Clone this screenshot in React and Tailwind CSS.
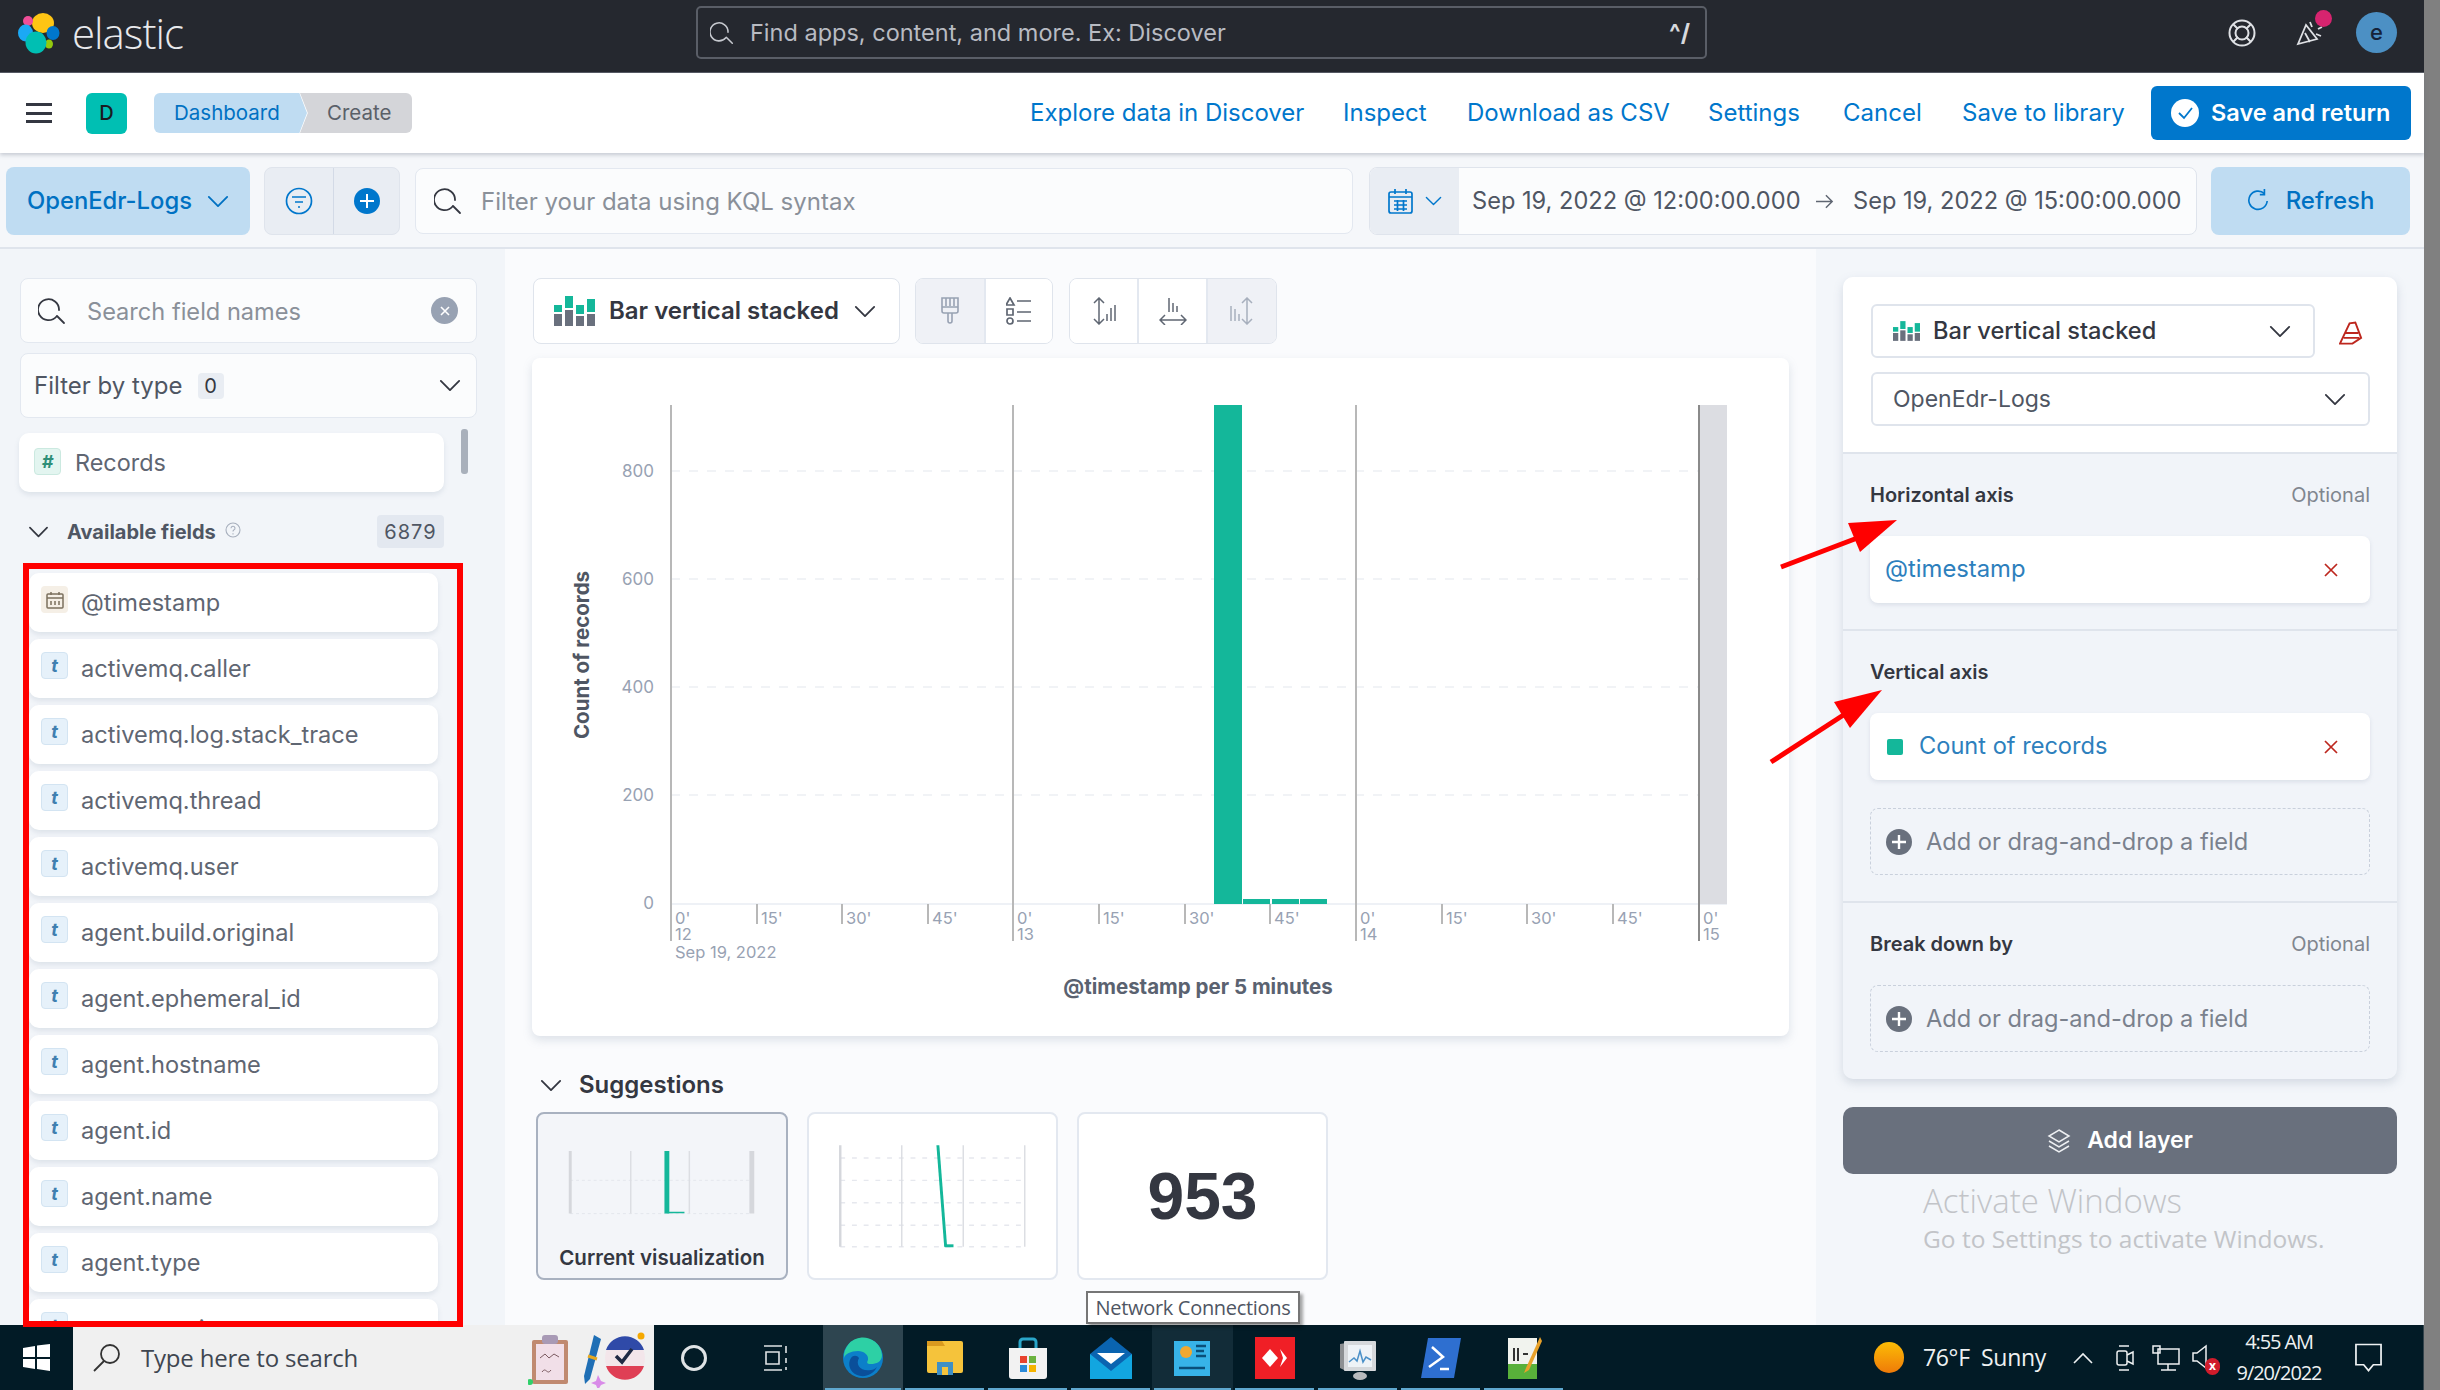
import React from "react";

const Search = ({ className }) => (
  <svg viewBox="0 0 28 28" fill="none" stroke="currentColor" strokeWidth="1.8" strokeLinecap="round" className={className}>
    <path d="M18.5 19.5A10.5 10.5 0 1 1 21 13" />
    <path d="M19 19l7 7" />
  </svg>
);
const Chev = ({ className }) => (
  <svg viewBox="0 0 24 14" fill="none" stroke="currentColor" strokeWidth="2" strokeLinecap="round" strokeLinejoin="round" className={className}>
    <path d="M2 2l10 10L22 2" />
  </svg>
);
const BarStack = ({ className }) => (
  <svg viewBox="0 0 41 30" className={className}>
    <g fill="#69707d">
      <rect x="0" y="18" width="8" height="12" />
      <rect x="11" y="14" width="8" height="16" />
      <rect x="22" y="20" width="8" height="10" />
      <rect x="33" y="18" width="8" height="12" />
    </g>
    <g fill="#14b79a">
      <rect x="0" y="9" width="8" height="7" />
      <rect x="11" y="0" width="8" height="12" />
      <rect x="22" y="9" width="8" height="9" />
      <rect x="33" y="3" width="8" height="13" />
    </g>
  </svg>
);
const Logo = () => (
  <svg viewBox="0 0 42 42" className="w-[42px] h-[42px]">
    <ellipse cx="25" cy="11" rx="11" ry="10" fill="#fec514" />
    <ellipse cx="10" cy="9" rx="5" ry="5" fill="#f04e98" />
    <ellipse cx="7.5" cy="21" rx="7.5" ry="8.5" fill="#1ba9f5" />
    <ellipse cx="35" cy="21" rx="6.5" ry="7" fill="#0077cc" />
    <ellipse cx="31" cy="32" rx="4" ry="4.5" fill="#93c90e" />
    <ellipse cx="18" cy="30.5" rx="10.5" ry="11" fill="#00bfb3" />
  </svg>
);
const PlusDot = () => (
  <svg viewBox="0 0 26 26" className="w-[26px] h-[26px] shrink-0">
    <circle cx="13" cy="13" r="13" fill="#69707d" />
    <path d="M13 6v14M6 13h14" stroke="#fff" strokeWidth="2.4" />
  </svg>
);
const XMark = () => (
  <svg viewBox="0 0 14 14" className="w-[14px] h-[14px] shrink-0" stroke="#bd271e" strokeWidth="1.7" fill="none">
    <path d="M1 1l12 12M13 1L1 13" />
  </svg>
);
const FieldRow = ({ name, type }) => (
  <div className="h-[59px] w-[409px] shrink-0 bg-white rounded-[10px] shadow-[0_3px_5px_rgba(120,135,160,0.16)] flex items-center pl-[12px]">
    {type === "date" ? (
      <span className="w-[27px] h-[27px] -mt-[6px] rounded-[4px] bg-[#f5efe6] flex items-center justify-center shrink-0">
        <svg viewBox="0 0 18 18" className="w-[18px] h-[18px]" fill="none" stroke="#7b705e" strokeWidth="1.5">
          <rect x="1" y="3" width="16" height="14" rx="1" />
          <path d="M1 7h16M5 1v3M13 1v3M5 10v4M9 10v4M13 10v4" />
        </svg>
      </span>
    ) : (
      <span className="w-[27px] h-[27px] -mt-[6px] rounded-[4px] bg-[#e6f1fa] border border-[#d3e4f2] flex items-center justify-center text-[#3f7fb0] text-[18px] font-bold italic shrink-0 leading-none">t</span>
    )}
    <span className="ml-[13px] text-[23.6px] leading-none text-[#5f6672]">{name}</span>
  </div>
);
const fields = ["activemq.caller", "activemq.log.stack_trace", "activemq.thread", "activemq.user", "agent.build.original", "agent.ephemeral_id", "agent.hostname", "agent.id", "agent.name", "agent.type", "agent.version"];

const Chart = () => {
  const ticks = [
    [671, "0'", "12"], [757, "15'"], [842, "30'"], [928, "45'"], [1013, "0'", "13"], [1099, "15'"], [1185, "30'"], [1270, "45'"],
    [1356, "0'", "14"], [1442, "15'"], [1527, "30'"], [1613, "45'"], [1699, "0'", "15"],
  ];
  const ox = 532, oy = 358;
  return (
    <svg viewBox="0 0 1257 678" className="w-full h-full" fontFamily="Inter, sans-serif">
      <g transform={`translate(${-ox} ${-oy})`}>
        {[471, 579, 687, 795].map((y) => (
          <line key={y} x1="671" x2="1727" y1={y} y2={y} stroke="#edf0f4" strokeWidth="1.5" strokeDasharray="9 9" />
        ))}
        <line x1="671" x2="1727" y1="904" y2="904" stroke="#e9edf3" strokeWidth="1.5" />
        <rect x="1699" y="405" width="28" height="499" fill="#dcdde2" />
        {ticks.map(([x, a, b]) => (
          <g key={x}>
            <line x1={x} x2={x} y1={b ? 405 : 904} y2={b ? 941 : 924} stroke={x === 1699 ? "#8a8a8a" : "#b8b8b8"} strokeWidth="2" />
            <text x={x + 4} y="924" fontSize="16.5" fill="#98a2b3">{a}</text>
            {b && <text x={x + 4} y="940" fontSize="16.5" fill="#98a2b3">{b}</text>}
          </g>
        ))}
        <text x="675" y="958" fontSize="16.5" fill="#98a2b3">Sep 19, 2022</text>
        <rect x="1214" y="405" width="28" height="499" fill="#14b79a" />
        <rect x="1243" y="899" width="27" height="5" fill="#14b79a" />
        <rect x="1272" y="899" width="27" height="5" fill="#14b79a" />
        <rect x="1300" y="899" width="27" height="5" fill="#14b79a" />
        {[["800", 477], ["600", 585], ["400", 693], ["200", 801], ["0", 909]].map(([t, y]) => (
          <text key={t} x="654" y={y} textAnchor="end" fontSize="17" fill="#98a2b3">{t}</text>
        ))}
        <text transform="translate(589 655) rotate(-90)" textAnchor="middle" fontSize="20.5" fontWeight="700" fill="#4f5663">Count of records</text>
        <text x="1198" y="994" textAnchor="middle" fontSize="20.5" fontWeight="700" fill="#5a6270">@timestamp per 5 minutes</text>
      </g>
    </svg>
  );
};

const DropZone = () => (
  <div className="h-[67px] w-[500px] rounded-[8px] border border-dashed border-[#c9d0dc] flex items-center pl-[15px]">
    <PlusDot />
    <span className="ml-[14px] text-[23.6px] leading-none text-[#7a818d]">Add or drag-and-drop a field</span>
  </div>
);
const SectionHead = ({ title, optional }) => (
  <div className="flex justify-between items-center h-[24px]">
    <span className="text-[20px] font-semibold text-[#343741]">{title}</span>
    {optional && <span className="text-[20px] text-[#80868f]">Optional</span>}
  </div>
);

const Btn = ({ children, className = "" }) => <div className={`flex items-center justify-center ${className}`}>{children}</div>;

export default function App() {
  return (
    <div className="relative w-[2440px] h-[1390px] overflow-hidden flex bg-[#808080] font-['Inter',sans-serif]">
      <div className="w-[2424px] h-full flex flex-col shrink-0">
        {/* top dark bar */}
        <div className="h-[73px] bg-[#25282f] flex items-center border-b border-[#555a63] shrink-0 pl-[18px] pb-[7px]">
          <Logo />
          <span className="ml-[12px] text-[42px] font-light tracking-[-1px] text-[#e8e9ec] leading-none w-[110px] font-['Open_Sans',sans-serif]">elastic</span>
          <div className="ml-[514px] w-[1011px] h-[53px] border-2 border-[#5a5e67] rounded-[5px] flex items-center pl-[12px] pr-[15px]">
            <Search className="w-[24px] h-[24px] text-[#c6c9cf]" />
            <span className="ml-[16px] text-[23.5px] text-[#b8bbc2] leading-none">Find apps, content, and more. Ex: Discover</span>
            <span className="ml-auto text-[24px] font-bold text-[#d7d9dd] leading-none">^/</span>
          </div>
          <svg viewBox="0 0 28 28" className="ml-[521px] w-[28px] h-[30px]" fill="none" stroke="#dfe1e5" strokeWidth="2">
            <circle cx="14" cy="14" r="12.5" />
            <circle cx="14" cy="14" r="6.5" />
            <path d="M5 5l5 5M23 5l-5 5M5 23l5-5M23 23l-5-5" />
          </svg>
          <div className="relative ml-[40px] w-[34px] h-[40px]">
            <svg viewBox="0 0 28 28" className="absolute left-0 top-[6px] w-[28px] h-[28px]" fill="none" stroke="#dfe1e5" strokeWidth="1.8">
              <path d="M2 25L10 6l11 14zM9 14l5 9M14 3l2 5M22 10l4-2M20 15l5 2" />
            </svg>
            <span className="absolute right-[-2px] top-[-3px] w-[17px] h-[17px] rounded-full bg-[#d6246f]" />
          </div>
          <div className="ml-[26px] w-[41px] h-[41px] rounded-full bg-[#4c90c4] flex items-center justify-center text-[#15233a] text-[22px] font-medium">e</div>
        </div>
        {/* breadcrumb bar */}
        <div className="h-[80px] bg-white flex items-center shrink-0 relative z-10 shadow-[0_2px_4px_rgba(90,100,120,0.3)] pl-[26px]">
          <div className="w-[26px] h-[20px] flex flex-col justify-between">
            <span className="h-[3px] bg-[#343741]" />
            <span className="h-[3px] bg-[#343741]" />
            <span className="h-[3px] bg-[#343741]" />
          </div>
          <div className="ml-[34px] w-[41px] h-[41px] rounded-[6px] bg-[#00bfb3] flex items-center justify-center text-[20px] text-[#1a1c21] font-medium">D</div>
          <div className="ml-[27px] flex h-[40px] items-center">
            <div className="w-[153px] h-full bg-[#bfdcf2] rounded-l-[6px] flex items-center pl-[20px] text-[20.5px] text-[#0071c2] [clip-path:polygon(0_0,95%_0,100%_50%,95%_100%,0_100%)]">Dashboard</div>
            <div className="-ml-[7px] w-[112px] h-full bg-[#d4d5d9] rounded-r-[6px] flex items-center pl-[27px] text-[20.5px] text-[#5a6068] [clip-path:polygon(0_0,100%_0,100%_100%,0_100%,7%_50%)]">Create</div>
          </div>
          <div className="ml-[618px] flex items-center text-[24px] text-[#0077cc] leading-none">
            <span className="w-[272px] whitespace-nowrap">Explore data in Discover</span>
            <span className="ml-[41px] w-[83px]">Inspect</span>
            <span className="ml-[41px] w-[200px] whitespace-nowrap">Download as CSV</span>
            <span className="ml-[41px] w-[94px]">Settings</span>
            <span className="ml-[41px] w-[78px]">Cancel</span>
            <span className="ml-[41px] w-[162px] whitespace-nowrap">Save to library</span>
          </div>
          <div className="ml-[27px] w-[260px] h-[54px] bg-[#0077cc] rounded-[6px] flex items-center pl-[20px] text-[23.5px] font-semibold text-white">
            <svg viewBox="0 0 28 28" className="w-[28px] h-[28px]">
              <circle cx="14" cy="14" r="14" fill="#fff" />
              <path d="M8 14l5 5 8-10" stroke="#0077cc" strokeWidth="1.8" fill="none" />
            </svg>
            <span className="ml-[12px] whitespace-nowrap">Save and return</span>
          </div>
        </div>
        {/* query bar */}
        <div className="h-[96px] bg-[#f5f7fa] border-b-2 border-[#dfe4ec] flex items-center shrink-0 pl-[6px] pt-[2px]">
          <Btn className="w-[244px] h-[68px] bg-[#bfdcf2] rounded-[8px] text-[23.8px] font-medium text-[#0071c2]">
            <span>OpenEdr-Logs</span>
            <Chev className="ml-[15px] w-[22px] h-[13px]" />
          </Btn>
          <div className="ml-[14px] w-[136px] h-[68px] bg-[#e9edf3] rounded-[8px] border border-[#dfe4ec] flex">
            <Btn className="w-[69px] border-r border-[#d3dae6]">
              <svg viewBox="0 0 28 28" className="w-[28px] h-[28px]" fill="none" stroke="#0077cc" strokeWidth="1.7">
                <circle cx="14" cy="14" r="12.5" />
                <path d="M7 10h14M10 15h8M13 20h2" />
              </svg>
            </Btn>
            <Btn className="flex-1">
              <svg viewBox="0 0 26 26" className="w-[26px] h-[26px]">
                <circle cx="13" cy="13" r="13" fill="#0077cc" />
                <path d="M13 6v14M6 13h14" stroke="#fff" strokeWidth="2" />
              </svg>
            </Btn>
          </div>
          <div className="ml-[15px] w-[938px] h-[66px] bg-[#fbfcfd] rounded-[8px] border border-[#e3e8f0] flex items-center pl-[18px]">
            <Search className="w-[28px] h-[28px] text-[#343741]" />
            <span className="ml-[19px] mt-[2px] text-[24px] text-[#8a9099] leading-none">Filter your data using KQL syntax</span>
          </div>
          <div className="ml-[16px] w-[828px] h-[68px] rounded-[8px] border border-[#dfe4ec] bg-[#fbfcfd] flex items-center overflow-hidden">
            <Btn className="w-[89px] h-full bg-[#e9edf3]">
              <svg viewBox="0 0 25 26" className="w-[25px] h-[26px]" fill="none" stroke="#0077cc" strokeWidth="1.7">
                <rect x="1" y="4" width="23" height="21" rx="2" />
                <path d="M1 9h23M7 1v5M18 1v5M6 13h13M6 17h13M6 21h13M9.5 12v11M15.5 12v11" />
              </svg>
              <Chev className="ml-[12px] w-[17px] h-[10px] text-[#0077cc]" />
            </Btn>
            <span className="ml-[13px] w-[326px] text-[23.6px] text-[#4f5663] whitespace-nowrap leading-none">Sep 19, 2022 @ 12:00:00.000</span>
            <svg viewBox="0 0 20 16" className="ml-[18px] w-[18px] h-[15px]" fill="none" stroke="#5f6672" strokeWidth="1.6">
              <path d="M0 8h18M11 1l7 7-7 7" />
            </svg>
            <span className="ml-[19px] w-[328px] text-[23.6px] text-[#4f5663] whitespace-nowrap leading-none">Sep 19, 2022 @ 15:00:00.000</span>
          </div>
          <Btn className="ml-[14px] w-[199px] h-[68px] bg-[#bfdcf2] rounded-[8px] text-[24px] font-medium text-[#0071c2]">
            <svg viewBox="0 0 24 26" className="w-[22px] h-[26px]" fill="none" stroke="#0077cc" strokeWidth="1.8">
              <path d="M19 5A10 10 0 1 0 22 13" />
              <path d="M19 0v6h-5" />
            </svg>
            <span className="ml-[17px]">Refresh</span>
          </Btn>
        </div>
        {/* main */}
        <div className="flex h-[1076px] shrink-0 relative">
          {/* sidebar */}
          <div className="w-[505px] bg-[#f2f5f9] pt-[29px] pl-[19px] shrink-0 relative z-10">
            <div className="ml-px w-[457px] h-[65px] bg-[#fbfcfd] rounded-[8px] border border-[#e3e8f0] flex items-center pl-[17px] pr-[18px]">
              <Search className="w-[28px] h-[28px] text-[#343741]" />
              <span className="ml-[21px] mt-[2px] text-[23.6px] text-[#8a9099] leading-none">Search field names</span>
              <span className="ml-auto w-[27px] h-[27px] rounded-full bg-[#98a2b3] flex items-center justify-center">
                <svg viewBox="0 0 10 10" className="w-[10px] h-[10px]" stroke="#fff" strokeWidth="1.6"><path d="M1 1l8 8M9 1L1 9" /></svg>
              </span>
            </div>
            <div className="ml-px mt-[10px] w-[457px] h-[65px] bg-[#fbfcfd] rounded-[8px] border border-[#e3e8f0] flex items-center pl-[13px] pr-[15px]">
              <span className="text-[24px] text-[#4f5663] leading-none">Filter by type</span>
              <span className="ml-[15px] w-[26px] h-[26px] rounded-[4px] bg-[#e9edf3] flex items-center justify-center text-[20px] text-[#343741]">0</span>
              <Chev className="ml-auto w-[22px] h-[13px] text-[#343741]" />
            </div>
            <div className="mt-[15px] flex items-start">
              <div className="w-[425px] h-[59px] bg-white rounded-[10px] shadow-[0_3px_5px_rgba(120,135,160,0.16)] flex items-center pl-[15px]">
                <span className="w-[27px] h-[27px] -mt-[2px] rounded-[4px] bg-[#e3f5f0] border border-[#cbe9e0] flex items-center justify-center text-[#2f8f78] text-[18px] font-bold italic leading-none">#</span>
                <span className="ml-[14px] text-[23.4px] text-[#5f6672] leading-none">Records</span>
              </div>
              <span className="ml-[17px] -mt-[4px] w-[7px] h-[45px] rounded-[3px] bg-[#a9b0bb]" />
            </div>
            <div className="mt-[23px] w-[425px] h-[33px] flex items-center pl-[9px]">
              <Chev className="w-[21px] h-[12px] text-[#343741]" />
              <span className="ml-[18px] text-[20px] font-bold text-[#4f5663] leading-none">Available fields</span>
              <svg viewBox="0 0 16 16" className="ml-[9px] -mt-[4px] w-[16px] h-[16px]" fill="none" stroke="#a7afbd" strokeWidth="1.1">
                <circle cx="8" cy="8" r="7" />
                <path d="M6 6.2a2 2 0 1 1 2.8 1.9c-.6.3-.8.7-.8 1.5M8 11.3v1.2" />
              </svg>
              <span className="ml-auto w-[67px] h-[33px] rounded-[4px] bg-[#e3e8f0] flex items-center justify-center text-[20px] tracking-[1px] text-[#4f5663]">6879</span>
            </div>
            <div className="mt-[15px] ml-[4px] w-[440px] h-[764px] border-[6px] border-[#ff0000] pt-[4px] flex flex-col gap-[7px] overflow-hidden">
              <FieldRow name="@timestamp" type="date" />
              {fields.map((f) => <FieldRow key={f} name={f} type="text" />)}
            </div>
          </div>
          {/* middle */}
          <div className="w-[1311px] bg-[#fafbfd] pt-[29px] pl-[28px] shrink-0 flex flex-col">
            <div className="flex items-center h-[66px]">
              <div className="w-[367px] h-[66px] bg-white rounded-[8px] border border-[#dfe4ec] flex items-center pl-[20px]">
                <BarStack className="w-[41px] h-[30px]" />
                <span className="ml-[14px] text-[24px] font-semibold text-[#343741] whitespace-nowrap leading-none">Bar vertical stacked</span>
                <Chev className="ml-[15px] w-[22px] h-[13px] text-[#343741]" />
              </div>
              <div className="ml-[15px] w-[138px] h-[66px] rounded-[8px] border border-[#dfe4ec] flex overflow-hidden">
                <Btn className="w-[70px] bg-[#eff1f6] border-r-2 border-[#e3e8f0]">
                  <svg viewBox="0 0 18 28" className="w-[18px] h-[28px]" fill="none" stroke="#98a2b3" strokeWidth="1.6">
                    <path d="M1 1h16v13a2 2 0 0 1-2 2H3a2 2 0 0 1-2-2zM1 10h16M5 1v8M9 1v8M13 1v8M7 16v8a2 2 0 0 0 4 0v-8" />
                  </svg>
                </Btn>
                <Btn className="flex-1 bg-white">
                  <svg viewBox="0 0 26 28" className="w-[26px] h-[28px]" fill="none" stroke="#5f6672" strokeWidth="1.7">
                    <path d="M4 1l4 7H0zM1 12h6v6H1z" />
                    <circle cx="4" cy="24" r="3" />
                    <path d="M11 4h14M11 15h14M11 24h14" />
                  </svg>
                </Btn>
              </div>
              <div className="ml-[16px] w-[208px] h-[66px] rounded-[8px] border border-[#dfe4ec] flex overflow-hidden">
                <Btn className="w-[69px] bg-white border-r-2 border-[#e3e8f0]">
                  <svg viewBox="0 0 24 28" className="w-[24px] h-[28px]" fill="none" stroke="#5f6672" strokeWidth="1.5">
                    <path d="M7 1v26M2 6l5-5 5 5M2 22l5 5 5-5M15 24v-7M19 24V11M23 24V8" />
                  </svg>
                </Btn>
                <Btn className="w-[69px] bg-white border-r-2 border-[#e3e8f0]">
                  <svg viewBox="0 0 28 28" className="w-[28px] h-[28px]" fill="none" stroke="#5f6672" strokeWidth="1.5">
                    <path d="M1 23h26M6 18l-5 5 5 5M22 18l5 5-5 5M10 15V1M14 15V6M18 15V9" />
                  </svg>
                </Btn>
                <Btn className="flex-1 bg-[#eff1f6]">
                  <svg viewBox="0 0 24 28" className="w-[24px] h-[28px]" fill="none" stroke="#a7afbd" strokeWidth="1.5">
                    <path d="M17 1v26M12 6l5-5 5 5M12 22l5 5 5-5M1 24V9M5 24V12M9 24v-7" />
                  </svg>
                </Btn>
              </div>
            </div>
            <div className="mt-[14px] -ml-px w-[1257px] h-[678px] bg-white rounded-[8px] shadow-[0_4px_10px_rgba(120,135,160,0.22)] shrink-0">
              <Chart />
            </div>
            <div className="mt-[34px] h-[30px] flex items-center pl-[7px]">
              <Chev className="w-[22px] h-[13px] text-[#343741]" />
              <span className="ml-[17px] text-[24px] font-semibold text-[#343741] leading-none">Suggestions</span>
            </div>
            <div className="mt-[12px] ml-[3px] flex gap-[19px]">
              <div className="relative w-[252px] h-[168px] rounded-[8px] border-2 border-[#a8b1c0] bg-[#f3f5f9] overflow-hidden">
                <svg viewBox="0 0 252 168" className="w-full h-full">
                  <g transform="translate(-536 -1112)">
                    <path d="M568 1180H754M568 1214H754" stroke="#e3e6ec" strokeWidth="1" strokeDasharray="3 3" />
                    <path d="M568 1150v64" stroke="#d5d7dc" strokeWidth="3" />
                    <path d="M630 1150v64M690 1150v64" stroke="#dcdee3" strokeWidth="1.5" />
                    <path d="M754 1150v64" stroke="#d5d7dc" strokeWidth="5" />
                    <path d="M667 1150v64" stroke="#14b79a" strokeWidth="5" />
                    <path d="M667 1213h18" stroke="#14b79a" strokeWidth="1.5" />
                  </g>
                </svg>
                <span className="absolute left-0 right-0 top-[134px] text-center text-[20.5px] font-semibold text-[#343741] leading-none">Current visualization</span>
              </div>
              <div className="w-[251px] h-[168px] rounded-[8px] border-2 border-[#e3e8f0] bg-white">
                <svg viewBox="0 0 251 168" className="w-full h-full">
                  <g transform="translate(-807 -1112)">
                    <path d="M838 1157H1027M838 1180H1027M838 1203H1027M838 1226H1027M838 1248H1027" stroke="#e6e8ee" strokeWidth="1.5" strokeDasharray="5 7" />
                    <path d="M838 1144v104" stroke="#d5d7dc" strokeWidth="2.5" />
                    <path d="M901 1144v104M964 1144v104M1027 1144v104" stroke="#dcdee3" strokeWidth="1.5" />
                    <path d="M938 1144l8 104" stroke="#14b79a" strokeWidth="3" fill="none" />
                    <path d="M945 1247h9" stroke="#14b79a" strokeWidth="3" />
                  </g>
                </svg>
              </div>
              <div className="w-[251px] h-[168px] rounded-[8px] border-2 border-[#e3e8f0] bg-white flex items-center justify-center font-['Liberation_Sans',sans-serif] text-[66px] font-bold text-[#343741] leading-none">953</div>
            </div>
          </div>
          {/* right */}
          <div className="w-[608px] bg-[#f3f6fa] pt-[28px] pl-[27px] shrink-0">
            <div className="w-[554px] h-[802px] rounded-[10px] bg-[#f1f4f9] shadow-[0_4px_10px_rgba(120,135,160,0.25)] overflow-hidden flex flex-col">
              <div className="h-[177px] bg-white border-b-2 border-[#dfe4ec] pl-[28px] pt-[27px] shrink-0">
                <div className="flex items-center">
                  <div className="w-[444px] h-[54px] rounded-[6px] border-2 border-[#dfe4ec] flex items-center pl-[20px] pr-[22px]">
                    <BarStack className="w-[27px] h-[20px]" />
                    <span className="ml-[13px] text-[23.6px] font-medium text-[#343741] leading-none whitespace-nowrap">Bar vertical stacked</span>
                    <Chev className="ml-auto w-[22px] h-[13px] text-[#343741]" />
                  </div>
                  <svg viewBox="0 0 26 28" className="ml-[24px] mt-[5px] w-[25px] h-[28px]" fill="none" stroke="#bd271e" strokeWidth="2">
                    <path d="M1 24L11 3l6-1 6 16-9 6zM7 13h13M5 18h16" />
                  </svg>
                </div>
                <div className="mt-[14px] w-[499px] h-[54px] rounded-[6px] border-2 border-[#dfe4ec] flex items-center pl-[20px] pr-[22px]">
                  <span className="text-[23px] text-[#4f5663] leading-none">OpenEdr-Logs</span>
                  <Chev className="ml-auto w-[22px] h-[13px] text-[#343741]" />
                </div>
              </div>
              <div className="h-[177px] border-b-2 border-[#dfe4ec] pl-[27px] pr-[27px] pt-[29px] shrink-0">
                <SectionHead title="Horizontal axis" optional />
                <div className="mt-[29px] h-[67px] w-[500px] bg-white rounded-[8px] shadow-[0_2px_4px_rgba(120,135,160,0.18)] flex items-center pl-[15px] pr-[32px] pb-[2px]">
                  <span className="text-[23.8px] text-[#2d80bd] leading-none">@timestamp</span>
                  <span className="ml-auto mt-[2px]"><XMark /></span>
                </div>
              </div>
              <div className="h-[272px] border-b-2 border-[#dfe4ec] pl-[27px] pr-[27px] pt-[29px] shrink-0">
                <SectionHead title="Vertical axis" />
                <div className="mt-[29px] h-[67px] w-[500px] bg-white rounded-[8px] shadow-[0_2px_4px_rgba(120,135,160,0.18)] flex items-center pl-[17px] pr-[32px] pb-[2px]">
                  <span className="mt-[2px] w-[16px] h-[16px] rounded-[2px] bg-[#14b79a]" />
                  <span className="ml-[16px] text-[23.6px] text-[#2d80bd] leading-none">Count of records</span>
                  <span className="ml-auto mt-[2px]"><XMark /></span>
                </div>
                <div className="mt-[28px]"><DropZone /></div>
              </div>
              <div className="pl-[27px] pr-[27px] pt-[29px]">
                <SectionHead title="Break down by" optional />
                <div className="mt-[29px]"><DropZone /></div>
              </div>
            </div>
            <div className="mt-[28px] w-[554px] h-[67px] rounded-[10px] bg-[#69707d] flex items-center justify-center text-white text-[23px] font-semibold">
              <svg viewBox="0 0 24 24" className="w-[24px] h-[24px]" fill="none" stroke="#eef0f3" strokeWidth="1.5">
                <path d="M12 1l10 6-10 6L2 7zM2 12l10 6 10-6M2 17l10 6 10-6" />
              </svg>
              <span className="ml-[16px]">Add layer</span>
            </div>
            <div className="mt-[6px] ml-[80px] text-[#c2c4c8] font-['Open_Sans',sans-serif]">
              <div className="text-[33px] leading-[42px] font-light">Activate Windows</div>
              <div className="mt-[2px] text-[24.5px] leading-[30px]">Go to Settings to activate Windows.</div>
            </div>
          </div>
        </div>
        {/* taskbar */}
        <div className="h-[65px] bg-[#021b26] flex items-stretch shrink-0 relative font-['Open_Sans',sans-serif] border-r border-[#33434b]">
          <Btn className="w-[73px]">
            <svg viewBox="0 0 27 27" className="w-[27px] h-[27px]" fill="#fff">
              <path d="M0 4l12-2v11H0zM14 1.5L27 0v13H14zM0 15h12v10L0 23zM14 15h13v12l-13-2z" />
            </svg>
          </Btn>
          <div className="w-[581px] bg-[#f0f0f0] flex items-center pl-[20px] relative">
            <svg viewBox="0 0 28 28" className="w-[28px] h-[28px]" fill="none" stroke="#333" strokeWidth="1.8">
              <circle cx="17" cy="10" r="9" />
              <path d="M11 17L1 27" />
            </svg>
            <span className="ml-[20px] text-[24px] text-[#3f4650] leading-none tracking-[-0.2px]">Type here to search</span>
            <svg viewBox="0 0 118 56" className="absolute left-[455px] top-[7px] w-[118px] h-[56px]">
              <rect x="4" y="8" width="36" height="44" rx="2" fill="#c08a70" />
              <rect x="8" y="12" width="28" height="36" fill="#f1dfe8" />
              <rect x="14" y="3" width="16" height="9" rx="3" fill="#a89ab5" />
              <path d="M12 26l5-4 4 4 5-4 5 3M14 40c4-6 5 4 9-2" stroke="#7a5a60" fill="none" />
              <circle cx="2" cy="50" r="3" fill="#2fd06a" />
              <path d="M66 3l7 4-11 40-5 5-1-8z" fill="#1f6fb5" />
              <path d="M60 24l9 3" stroke="#e5a820" strokeWidth="3" />
              <path d="M70 43l3 6 5 2-5 2-3 5-2-5-5-2 5-2z" fill="#d98be8" />
              <circle cx="97" cy="26" r="20" fill="#f3e6ea" />
              <path d="M78 18a20 20 0 0 1 38 0z" fill="#2f4aa8" />
              <path d="M78 34a20 20 0 0 0 38 0z" fill="#df3f55" />
              <path d="M88 24l6 6 10-13" stroke="#1f2a44" strokeWidth="3.5" fill="none" />
              <circle cx="113" cy="4" r="3.5" fill="#f5a800" />
            </svg>
          </div>
          <Btn className="w-[80px]">
            <span className="w-[26px] h-[26px] rounded-full border-[3px] border-[#dfe3e5]" />
          </Btn>
          <Btn className="w-[84px]">
            <svg viewBox="0 0 28 28" className="w-[28px] h-[28px]" fill="none" stroke="#dfe3e5" strokeWidth="1.6">
              <path d="M2 2h18M2 26h18M4 8h13v12H4zM24 2v7M24 14v5M24 23v3" />
            </svg>
          </Btn>
          <div className="flex items-stretch ml-[5px]">
            {[
              ["w-[80px] bg-[#2e4550]", "edge"], ["w-[83px]", "folder"], ["w-[83px]", "store"], ["w-[83px]", "mail"], ["w-[81px] bg-[#122c38]", "net"], ["w-[83px]", "red"], ["w-[83px]", "mon"], ["w-[83px]", "ps"], ["w-[83px]", "note"],
            ].map(([cls, k]) => (
              <div key={k} className={`relative flex items-center justify-center ${cls}`}>
                <TaskIcon k={k} />
                <span className="absolute bottom-0 left-[2px] right-[2px] h-[2px] bg-[#5fa8cf]" />
              </div>
            ))}
          </div>
          <div className="ml-auto flex items-center pr-[41px] text-[#eef1f2]">
            <span className="w-[30px] h-[31px] rounded-full bg-gradient-to-b from-[#fbbc05] to-[#ee7a08]" />
            <span className="ml-[19px] text-[23px] leading-none whitespace-nowrap tracking-[-0.3px]">76°F&nbsp;&nbsp;Sunny</span>
            <svg viewBox="0 0 20 12" className="ml-[27px] w-[20px] h-[12px]" fill="none" stroke="#eef1f2" strokeWidth="1.6"><path d="M1 11l9-9 9 9" /></svg>
            <svg viewBox="0 0 20 28" className="ml-[22px] w-[20px] h-[28px]" fill="none" stroke="#eef1f2" strokeWidth="1.5">
              <rect x="2" y="7" width="10" height="14" rx="2" />
              <path d="M12 11l6-3v12l-6-3M4 2h10M4 26h10" />
            </svg>
            <svg viewBox="0 0 28 28" className="ml-[17px] w-[28px] h-[28px]" fill="none" stroke="#eef1f2" strokeWidth="1.5">
              <path d="M6 5h21v15H6zM16 20v6M9 26h15M1 2h7v7H1z" />
            </svg>
            <div className="relative ml-[12px] w-[28px] h-[28px]">
              <svg viewBox="0 0 16 26" className="absolute left-0 top-0 w-[16px] h-[26px]" fill="none" stroke="#eef1f2" strokeWidth="1.5"><path d="M1 9h4l9-7v22l-9-7H1z" /></svg>
              <span className="absolute right-0 bottom-[-3px] w-[15px] h-[17px] rounded-full bg-[#d01c2b] text-white text-[12px] leading-[16px] text-center font-bold">x</span>
            </div>
            <div className="ml-[14px] w-[90px] flex flex-col items-center text-[20px] leading-none tracking-[-1.1px]">
              <span>4:55 AM</span>
              <span className="mt-[11px]">9/20/2022</span>
            </div>
            <svg viewBox="0 0 28 30" className="ml-[31px] w-[27px] h-[30px]" fill="none" stroke="#eef1f2" strokeWidth="1.8"><path d="M1 1h26v21H19l-5 6-5-6H1z" /></svg>
          </div>
        </div>
      </div>
      <div className="w-[16px] h-full bg-[#808080]" />

      {/* tooltip */}
      <div className="absolute left-[1086px] top-[1291px] w-[214px] h-[33px] bg-white border-2 border-[#767676] shadow-[3px_3px_3px_rgba(0,0,0,0.35)] flex items-center justify-center text-[20px] text-[#4f5663] font-['Open_Sans',sans-serif] tracking-[-0.3px] z-20 leading-none whitespace-nowrap">Network Connections</div>
      {/* annotation arrows */}
      <svg viewBox="0 0 2440 1390" className="absolute left-0 top-0 w-[2440px] h-[1390px] pointer-events-none z-20">
        <path d="M1781 567L1860 537" stroke="#ff0000" strokeWidth="5" />
        <path d="M1897 520L1848 523L1860 552z" fill="#ff0000" />
        <path d="M1771 762L1845 714" stroke="#ff0000" strokeWidth="5" />
        <path d="M1882 690L1834 702L1850 728z" fill="#ff0000" />
      </svg>
    </div>
  );
}

function TaskIcon({ k }) {
  const c = "w-[44px] h-[44px]";
  if (k === "edge") return (
    <svg viewBox="0 0 44 44" className={c}>
      <circle cx="22" cy="22" r="20" fill="#0c7fc9" />
      <path d="M3 22a19 19 0 0 1 38-3c0 7-6 9-11 9-5 0-4-2-3-4 1-5-4-9-10-9C10 15 4 18 3 22z" fill="#2dd0a5" />
      <path d="M18 22c-4 7 2 14 12 12 2 0 4-1 6-3-4 8-13 11-20 8C9 36 6 28 10 22c2-3 6-3 8 0z" fill="#0a4f9a" />
    </svg>
  );
  if (k === "folder") return (
    <svg viewBox="0 0 44 44" className={c}>
      <rect x="4" y="5" width="36" height="32" rx="2" fill="#f5c33b" />
      <path d="M4 5h15l3 5H4z" fill="#d99a1f" />
      <rect x="14" y="26" width="16" height="13" fill="#3f8fc4" />
      <rect x="19" y="31" width="6" height="8" fill="#f5c33b" />
    </svg>
  );
  if (k === "store") return (
    <svg viewBox="0 0 44 44" className={c}>
      <path d="M14 12V6a3 3 0 0 1 3-3h10a3 3 0 0 1 3 3v6" fill="none" stroke="#2aa6c9" strokeWidth="3" />
      <path d="M3 12h38v28a3 3 0 0 1-3 3H6a3 3 0 0 1-3-3z" fill="#f2f2f2" />
      <rect x="14" y="20" width="7" height="7" fill="#e8432e" /><rect x="23" y="20" width="7" height="7" fill="#6cb33f" />
      <rect x="14" y="29" width="7" height="7" fill="#2b8ad8" /><rect x="23" y="29" width="7" height="7" fill="#f5b400" />
    </svg>
  );
  if (k === "mail") return (
    <svg viewBox="0 0 44 44" className={c}>
      <path d="M1 18L22 1l21 17v25H1z" fill="#0a64b0" />
      <path d="M1 43V18l21 17 21-17v25z" fill="#12a6e0" />
      <path d="M8 17h28L22 28z" fill="#fff" />
    </svg>
  );
  if (k === "net") return (
    <svg viewBox="0 0 44 44" className={c}>
      <rect x="3" y="5" width="36" height="35" fill="#37b3e8" />
      <circle cx="15" cy="16" r="6" fill="#f0a830" />
      <path d="M25 10h10M25 15h8M25 20h10M8 32h26" stroke="#0a4f7a" strokeWidth="2.5" />
    </svg>
  );
  if (k === "red") return (
    <svg viewBox="0 0 44 44" className={c}>
      <rect x="2" y="1" width="40" height="42" fill="#f01f26" />
      <path d="M17 13l8 9-8 9-8-9z" fill="#fff" />
      <path d="M27 13l7 9-7 9 3-9z" fill="#fff" />
    </svg>
  );
  if (k === "mon") return (
    <svg viewBox="0 0 44 44" className={c}>
      <path d="M4 8l6-1v28l-6-3z" fill="#8c8f92" />
      <rect x="8" y="5" width="32" height="30" rx="1" fill="#d5d8db" />
      <rect x="12" y="9" width="24" height="22" fill="#eef3f7" />
      <path d="M13 26l5-4 3 3 3-10 3 11 3-5 5 3" stroke="#4a90c8" strokeWidth="1.5" fill="none" />
      <ellipse cx="24" cy="40" rx="7" ry="4" fill="#b7babd" />
    </svg>
  );
  if (k === "ps") return (
    <svg viewBox="0 0 44 44" className={c}>
      <path d="M9 2h33l-7 40H2z" fill="#2e6fd0" />
      <path d="M13 11l11 10-14 10M21 33h9" stroke="#fff" strokeWidth="2.5" fill="none" />
    </svg>
  );
  return (
    <svg viewBox="0 0 36 44" className="w-[36px] h-[44px]">
      <rect x="2" y="2" width="29" height="41" fill="#f1f3ee" />
      <rect x="2" y="28" width="29" height="15" fill="#58b03a" />
      <path d="M8 12v13M12 12v13M17 18h5" stroke="#333" strokeWidth="2" />
      <path d="M34 1L20 32l-2 5 5-3L36 5z" fill="#e8a12a" />
    </svg>
  );
}
